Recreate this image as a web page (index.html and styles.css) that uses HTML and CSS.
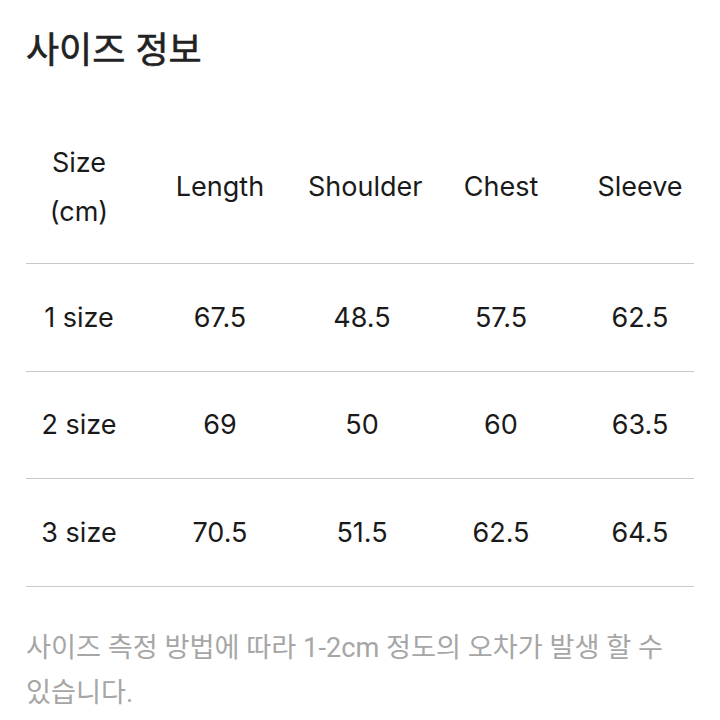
FILE: index.html
```html
<!DOCTYPE html>
<html lang="ko">
<head>
<meta charset="utf-8">
<link rel="stylesheet" href="styles.css">
</head>
<body>
<main class="page">
  <h1 class="title">사이즈 정보</h1>
  <div class="table">
    <div class="row head">
      <div class="cell">Size<br>(cm)</div>
      <div class="cell">Length</div>
      <div class="cell">Shoulder</div>
      <div class="cell">Chest</div>
      <div class="cell">Sleeve</div>
    </div>
    <div class="row">
      <div class="cell">1 size</div>
      <div class="cell">67.5</div>
      <div class="cell">48.5</div>
      <div class="cell">57.5</div>
      <div class="cell">62.5</div>
    </div>
    <div class="row">
      <div class="cell">2 size</div>
      <div class="cell">69</div>
      <div class="cell">50</div>
      <div class="cell">60</div>
      <div class="cell">63.5</div>
    </div>
    <div class="row">
      <div class="cell">3 size</div>
      <div class="cell">70.5</div>
      <div class="cell">51.5</div>
      <div class="cell">62.5</div>
      <div class="cell">64.5</div>
    </div>
  </div>
  <p class="note">사이즈 측정 방법에 따라 1-2cm 정도의 오차가 발생 할 수 있습니다.</p>
</main>
</body>
</html>
```

FILE: styles.css
```css
html, body {
  margin: 0;
  padding: 0;
  background: #ffffff;
}
.page {
  width: 668px;
  padding: 0 26px;
  font-family: Inter, "Noto Sans CJK KR", sans-serif;
  color: #1a1a1a;
}
.title {
  margin: 23px 0 0 0;
  font-family: "Noto Sans CJK KR", sans-serif;
  font-size: 36px;
  line-height: 48px;
  font-weight: 400;
  color: #222222;
  -webkit-text-stroke: 0.6px #222222;
}
.table {
  margin-top: 39px;
  display: flex;
  flex-direction: column;
}
.row {
  box-sizing: border-box;
  display: grid;
  grid-template-columns: 106px 176px 108px 170px 108px;
  align-items: center;
  height: 107.5px;
  border-bottom: 1.5px solid #c8c8c8;
  font-size: 27px;
}
.row.head {
  height: 154px;
  line-height: 49px;
}
.cell {
  text-align: center;
  white-space: nowrap;
}
.note {
  margin: 39px 0 0 0;
  font-family: Roboto, "Noto Sans CJK KR", sans-serif;
  font-size: 27.2px;
  line-height: 45px;
  color: #a6a6a6;
}
```
